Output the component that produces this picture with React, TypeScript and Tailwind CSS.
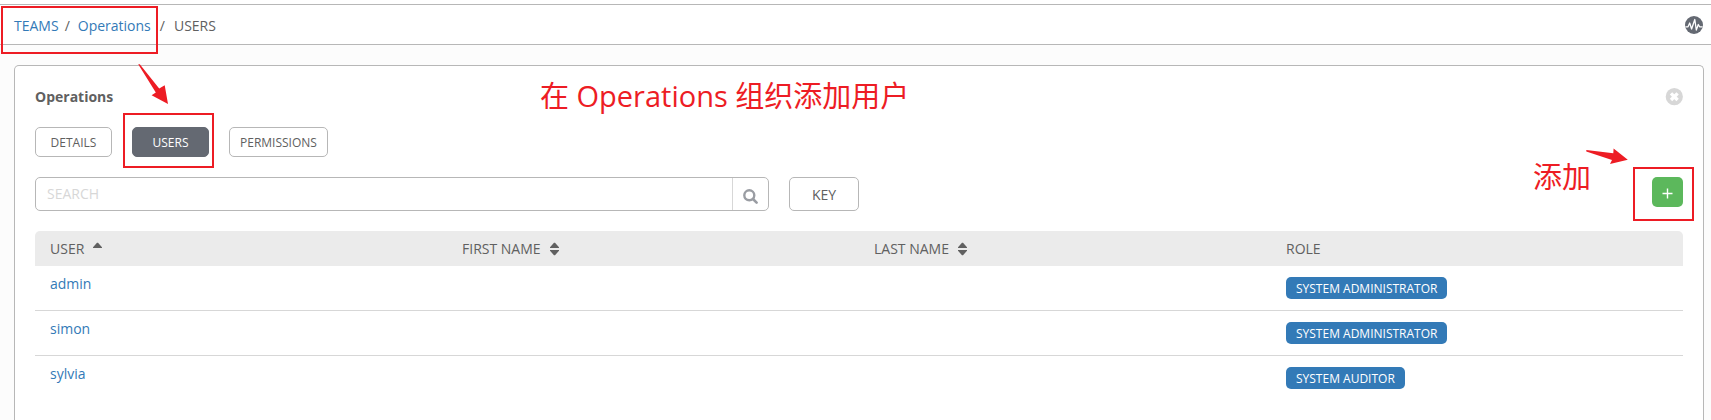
import React from "react";

type Row = { user: string; role: string };

const rows: Row[] = [
  { user: "admin", role: "SYSTEM ADMINISTRATOR" },
  { user: "simon", role: "SYSTEM ADMINISTRATOR" },
  { user: "sylvia", role: "SYSTEM AUDITOR" },
];

function SortIcon({ ascending = false }: { ascending?: boolean }) {
  return (
    <svg width="9" height="14" viewBox="0 0 9 14" fill="currentColor" aria-hidden="true">
      <path d="M0 5.2 L4 0.8 H5 L9 5.2 V6 H0 Z" />
      {!ascending && <path d="M0 8.8 L4 13.2 H5 L9 8.8 V8 H0 Z" />}
    </svg>
  );
}

function ActivityIcon() {
  return (
    <svg width="18" height="18" viewBox="0 0 18 18" aria-hidden="true">
      <circle cx="9" cy="9" r="9" fill="#646972" />
      <path
        d="M0.5 10.8 H3 L4.7 7 L6.6 13 L9.8 3.5 L11.3 14 L13.3 8.5 L14.6 10.8 H17.5"
        fill="none"
        stroke="#fff"
        strokeWidth="1.3"
        strokeLinejoin="round"
      />
    </svg>
  );
}

function Header({ label, sort }: { label: string; sort?: "asc" | "none" }) {
  return (
    <th className="h-[35px] bg-[#ebebeb] px-[15px] text-left font-normal first:rounded-tl-[5px] last:rounded-tr-[5px]">
      {sort ? (
        <button className="flex items-center gap-[9px]">
          {label}
          <SortIcon ascending={sort === "asc"} />
        </button>
      ) : (
        label
      )}
    </th>
  );
}

const tab = "h-[30px] min-w-[77px] rounded-[5px] border px-[10px] pt-[2px] text-xs";

export default function App() {
  return (
    <div className="relative flex min-h-screen flex-col overflow-hidden bg-[#fcfcfc] font-['Open_Sans','Noto_Sans_CJK_SC',sans-serif] text-sm text-[#606060]">
      <header className="border-t-4 border-white">
        <div className="flex h-[41px] items-center justify-between border-y border-[#b7b7b7] bg-white pr-2 pl-[14px]">
          <nav aria-label="Breadcrumb" className="flex pt-[2px]">
            <a href="#teams" className="text-[#337ab7]">TEAMS</a>
            <span className="pr-2 pl-[6px]">/</span>
            <a href="#operations" className="text-[#337ab7]">Operations</a>
            <span className="px-[9px]">/</span>
            <span>USERS</span>
          </nav>
          <button aria-label="Activity stream">
            <ActivityIcon />
          </button>
        </div>
      </header>

      <main className="mt-5 mr-[7px] ml-[14px] flex-1 rounded-t-[5px] border border-b-0 border-[#b7b7b7] bg-white px-5 pt-5">
        <div className="flex h-[22px] items-center justify-between">
          <h1 className="font-bold">Operations</h1>
          <button aria-label="Close">
            <svg width="18" height="18" viewBox="0 0 18 18" aria-hidden="true">
              <circle cx="9.3" cy="8.7" r="8.6" fill="#d7d7d7" />
              <path d="M6 5.4 L12.6 12 M12.6 5.4 L6 12" stroke="#fff" strokeWidth="3.4" />
            </svg>
          </button>
        </div>

        <div className="mt-[19px] flex gap-5">
          <button className={`${tab} border-[#b7b7b7] bg-white`}>DETAILS</button>
          <button className={`${tab} border-[#646972] bg-[#646972] text-white`}>USERS</button>
          <button className={`${tab} border-[#b7b7b7] bg-white`}>PERMISSIONS</button>
        </div>

        <div className="mt-5 flex items-start">
          <form className="flex h-[34px] max-w-[734px] flex-1 rounded-[5px] border border-[#b7b7b7]">
            <input
              type="text"
              aria-label="Search"
              placeholder="SEARCH"
              className="min-w-0 flex-1 bg-transparent px-[11px] placeholder:text-[#d7d7d7]"
            />
            <button
              type="button"
              aria-label="Run search"
              className="flex w-9 items-center justify-center border-l border-[#d7d7d7] pt-1 text-[#9a9da3]"
            >
              <svg width="15" height="15" viewBox="0 0 15 15" fill="none" stroke="currentColor" aria-hidden="true">
                <circle cx="6.3" cy="6.3" r="5" strokeWidth="2.4" />
                <path d="M10 10 L13.6 13.6" strokeWidth="2.6" strokeLinecap="round" />
              </svg>
            </button>
          </form>
          <button className="ml-5 h-[34px] w-[70px] rounded-[5px] border border-[#b7b7b7] pt-[2px]">KEY</button>
          <button
            aria-label="Add user"
            className="ml-auto flex h-[30px] w-[31px] items-center justify-center rounded-[5px] bg-[#5cb85c] pt-[2px] text-white"
          >
            <svg width="11" height="11" viewBox="0 0 11 11" stroke="currentColor" aria-hidden="true">
              <path d="M5.5 0.5 V10.5 M0.5 5.5 H10.5" strokeWidth="1.4" />
            </svg>
          </button>
        </div>

        <table className="mt-5 w-full table-fixed border-separate border-spacing-0">
          <thead>
            <tr>
              <Header label="USER" sort="asc" />
              <Header label="FIRST NAME" sort="none" />
              <Header label="LAST NAME" sort="none" />
              <Header label="ROLE" />
            </tr>
          </thead>
          <tbody>
            {rows.map((row) => (
              <tr key={row.user} className="group">
                <td className="h-[45px] border-b border-[#d7d7d7] px-[15px] pt-2 align-top group-last:border-b-0">
                  <a href={`#${row.user}`} className="text-[#337ab7]">{row.user}</a>
                </td>
                <td className="border-b border-[#d7d7d7] group-last:border-b-0" />
                <td className="border-b border-[#d7d7d7] group-last:border-b-0" />
                <td className="border-b border-[#d7d7d7] px-[15px] pt-[11px] align-top group-last:border-b-0">
                  <span className="flex h-[22px] w-fit items-center rounded-[5px] bg-[#337ab7] px-[10px] pt-[2px] text-xs text-white">
                    {row.role}
                  </span>
                </td>
              </tr>
            ))}
          </tbody>
        </table>
      </main>

      <div className="pointer-events-none absolute inset-0 text-[29px] leading-9 text-[#ed1c24]">
        <div className="absolute top-[6px] left-px h-12 w-[157px] border-2" />
        <div className="absolute top-[113px] left-[123px] h-[55px] w-[91px] border-2" />
        <div className="absolute top-[167px] right-[17px] h-[54px] w-[61px] border-2" />
        <svg className="absolute top-16 left-[138px]" width="32" height="42" viewBox="138 64 32 42" fill="currentColor">
          <path d="M138.2 64.3 L139.8 64.3 L159.2 88.5 L164.7 85.3 L168 104 L151.6 95.3 L155.8 92.6 Z" />
        </svg>
        <svg className="absolute top-[148px] right-[82px]" width="44" height="18" viewBox="1585 148 44 18" fill="currentColor">
          <path d="M1586.3 150 L1613.3 153.3 L1613.6 148.6 L1627.8 159.8 L1610 164.1 L1612 160 L1586.3 151.5 Z" />
        </svg>
        <p className="absolute top-[78px] left-[540px] whitespace-nowrap">在 Operations 组织添加用户</p>
        <p className="absolute top-[159px] right-[120px] whitespace-nowrap">添加</p>
      </div>
    </div>
  );
}
